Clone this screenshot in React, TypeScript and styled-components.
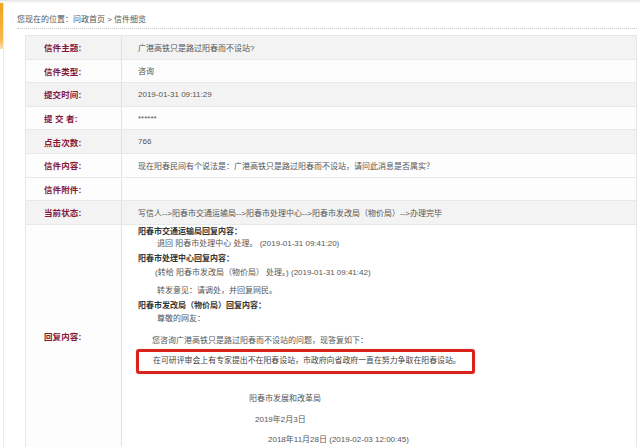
import { createGlobalStyle } from "styled-components";
import styled from "styled-components";

const GlobalStyle = createGlobalStyle`
  html, body {
    margin: 0;
    padding: 0;
    background: #fff;
  }
  body {
    font-family: "Liberation Sans", "Noto Sans CJK SC", sans-serif;
    -webkit-font-smoothing: antialiased;
  }
`;

const Page = styled.div`
  width: 640px;
  height: 447px;
  overflow: hidden;
  display: flex;
  flex-direction: column;
  background: #fff;
`;

const TopShade = styled.div`
  height: 3px;
  flex: none;
  background: linear-gradient(#e4e4e4, #fafafa);
`;

const Body = styled.div`
  flex: 1;
  display: flex;
`;

const Rail = styled.div`
  width: 3px;
  flex: none;
  display: flex;
  flex-direction: column;
  border-right: 1px solid #ececec;
`;

const RailAccent = styled.div`
  height: 46px;
  background: linear-gradient(#f2a21c, #f7b94a 80%, #fbe3b5);
`;

const Main = styled.div`
  flex: 1;
  padding-left: 13px;
  padding-right: 14px;
`;

const Breadcrumb = styled.div`
  font-size: 8px;
  line-height: 12px;
  color: #555;
  padding-top: 11px;
  padding-bottom: 2px;
  border-bottom: 1px dotted #c8c8c8;
`;

const Table = styled.div`
  margin: 6px 0 0 8px;
  width: 610px;
  border: 1px solid #e6e6e6;
  border-bottom: none;
`;

const Row = styled.div<{ $shade?: boolean; $tall?: boolean }>`
  display: grid;
  grid-template-columns: 96px 1fr;
  height: ${(p) => (p.$tall ? "auto" : "22.6px")};
  background: ${(p) => (p.$shade ? "#f3f3f3" : "#fdfdfd")};
  border-bottom: 1px solid #e8e8e8;
`;

const Label = styled.div`
  display: flex;
  align-items: center;
  padding-left: 18px;
  border-right: 1px solid #e2e2e2;
  font-size: 8.5px;
  font-weight: 700;
  color: #861838;
  letter-spacing: 0.1px;
`;

const Value = styled.div`
  display: flex;
  align-items: center;
  padding-left: 16px;
  font-size: 8px;
  color: #555;
`;

const Reply = styled.div`
  padding: 1px 0 1px 16px;
  font-size: 8px;
  color: #555;
  background: #fff;
`;

const Line = styled.div<{ $indent?: number; $gap?: number; $bold?: boolean }>`
  line-height: 12px;
  white-space: nowrap;
  padding-left: ${(p) => p.$indent ?? 0}px;
  margin-top: ${(p) => p.$gap ?? 0}px;
  font-weight: ${(p) => (p.$bold ? 700 : 400)};
  color: ${(p) => (p.$bold ? "#333" : "#555")};
`;

const Highlight = styled.div`
  margin: 2px 0 0 -2px;
  width: 319px;
  padding: 3px 0 4px 14px;
  border: 3px solid #d9231b;
  border-radius: 3px;
  box-shadow: 0 0 1px rgba(217, 35, 27, 0.5);
  font-size: 7.9px;
  line-height: 12px;
  white-space: nowrap;
  color: #444;
`;

const rows: { label: string; value: string; shade: boolean }[] = [
  { label: "信件主题:", value: "广港高铁只是路过阳春而不设站?", shade: true },
  { label: "信件类型:", value: "咨询", shade: false },
  { label: "提交时间:", value: "2019-01-31 09:11:29", shade: true },
  { label: "提 交 者:", value: "******", shade: false },
  { label: "点击次数:", value: "766", shade: true },
  {
    label: "信件内容:",
    value: "现在阳春民间有个说法是：广港高铁只是路过阳春而不设站，请问此消息是否属实？",
    shade: false,
  },
  { label: "信件附件:", value: "", shade: false },
  {
    label: "当前状态:",
    value: "写信人-->阳春市交通运输局-->阳春市处理中心-->阳春市发改局（物价局）-->办理完毕",
    shade: true,
  },
];

export default function App() {
  return (
    <Page>
      <GlobalStyle />
      <TopShade />
      <Body>
        <Rail>
          <RailAccent />
        </Rail>
        <Main>
          <Breadcrumb>您现在的位置：问政首页 &gt; 信件细览</Breadcrumb>
          <Table>
            {rows.map((r) => (
              <Row key={r.label} $shade={r.shade}>
                <Label>{r.label}</Label>
                <Value>{r.value}</Value>
              </Row>
            ))}
            <Row $tall>
              <Label>回复内容:</Label>
              <Reply>
                <Line $bold>阳春市交通运输局回复内容：</Line>
                <Line $indent={19}>退回 阳春市处理中心 处理。 (2019-01-31 09:41:20)</Line>
                <Line $bold $gap={3}>阳春市处理中心回复内容：</Line>
                <Line $indent={17} $gap={2}>(转给 阳春市发改局（物价局） 处理。) (2019-01-31 09:41:42)</Line>
                <Line $indent={19} $gap={6}>转发意见：请调处，并回复网民。</Line>
                <Line $bold $gap={3}>阳春市发改局（物价局）回复内容：</Line>
                <Line $indent={19} $gap={1}>尊敬的网友：</Line>
                <Line $indent={14} $gap={10}>您咨询广港高铁只是路过阳春而不设站的问题，现答复如下：</Line>
                <Highlight>在可研评审会上有专家提出不在阳春设站，市政府向省政府一直在努力争取在阳春设站。</Highlight>
                <Line $indent={111} $gap={19}>阳春市发展和改革局</Line>
                <Line $indent={117} $gap={9}>2019年2月3日</Line>
                <Line $indent={130} $gap={8}>2018年11月28日 (2019-02-03 12:00:45)</Line>
              </Reply>
            </Row>
          </Table>
        </Main>
      </Body>
    </Page>
  );
}
